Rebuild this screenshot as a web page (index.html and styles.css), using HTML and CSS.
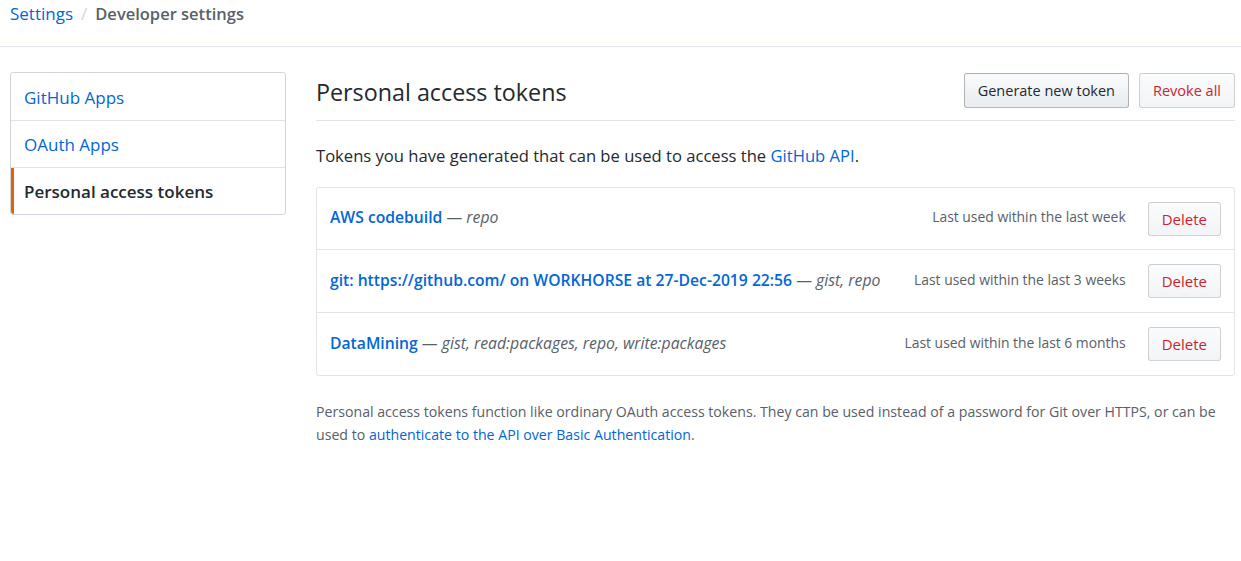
FILE: index.html
```html
<!DOCTYPE html>
<html>
<head>
<meta charset="utf-8">
<link rel="stylesheet" href="styles.css">
</head>
<body>
<header class="crumbs">
  <a class="crumb-link" href="#">Settings</a>
  <span class="crumb-sep">/</span>
  <span class="crumb-current">Developer settings</span>
</header>
<div class="layout">
  <nav class="menu">
    <a class="menu-item" href="#">GitHub Apps</a>
    <a class="menu-item" href="#">OAuth Apps</a>
    <a class="menu-item selected" href="#">Personal access tokens</a>
  </nav>
  <main class="content">
    <div class="subhead">
      <h2 class="subhead-title">Personal access tokens</h2>
      <div class="subhead-actions">
        <button class="btn">Generate new token</button>
        <button class="btn btn-danger">Revoke all</button>
      </div>
    </div>
    <p class="intro">Tokens you have generated that can be used to access the <a href="#">GitHub API</a>.</p>
    <div class="box">
      <div class="token-row">
        <div class="token-desc"><a class="token-name" href="#">AWS codebuild</a> <span class="scopes">— <em>repo</em></span></div>
        <span class="last-used">Last used within the last week</span>
        <button class="btn btn-danger btn-sm">Delete</button>
      </div>
      <div class="token-row">
        <div class="token-desc"><a class="token-name" href="#">git: https://github.com/ on WORKHORSE at 27-Dec-2019 22:56</a> <span class="scopes">— <em>gist, repo</em></span></div>
        <span class="last-used">Last used within the last 3 weeks</span>
        <button class="btn btn-danger btn-sm">Delete</button>
      </div>
      <div class="token-row">
        <div class="token-desc"><a class="token-name" href="#">DataMining</a> <span class="scopes">— <em>gist, read:packages, repo, write:packages</em></span></div>
        <span class="last-used">Last used within the last 6 months</span>
        <button class="btn btn-danger btn-sm">Delete</button>
      </div>
    </div>
    <p class="note">Personal access tokens function like ordinary OAuth access tokens. They can be used instead of a password for Git over HTTPS, or can be used to <a href="#">authenticate to the API over Basic Authentication</a>.</p>
  </main>
</div>
</body>
</html>
```
FILE: styles.css
```css
* { box-sizing: border-box; }
html, body { margin: 0; padding: 0; background: #fff; }
body {
  font-family: "Open Sans", "Noto Sans", sans-serif;
  color: #24292e;
  font-size: 15px;
}
a { color: #0366d6; text-decoration: none; }

.crumbs {
  height: 47px;
  border-bottom: 1px solid #e1e4e8;
  padding: 2px 10px 0;
  font-size: 17px;
  display: flex;
  align-items: flex-start;
  gap: 8px;
  line-height: 24px;
}
.crumb-link { color: #0366d6; }
.crumb-sep { color: #d1d5da; }
.crumb-current { color: #586069; font-weight: 600; font-size: 16.5px; }

.layout {
  display: flex;
  padding: 25px 6px 0 10px;
  gap: 30px;
}
.menu {
  width: 276px;
  flex: none;
  border: 1px solid #d1d5da;
  border-radius: 3px;
  align-self: flex-start;
  display: flex;
  flex-direction: column;
}
.menu-item {
  display: block;
  height: 47px;
  line-height: 48px;
  padding: 0 13px;
  font-size: 17px;
  color: #0366d6;
  border-bottom: 1px solid #e1e4e8;
}
.menu-item:first-child { height: 48px; line-height: 49px; }
.menu-item:last-child { border-bottom: 0; height: 46px; }
.menu-item.selected {
  color: #24292e;
  font-weight: 600;
  border-left: 3px solid #e36209;
  padding-left: 10px;
  border-bottom-left-radius: 3px;
}

.content { flex: 1; min-width: 0; }
.subhead {
  display: flex;
  align-items: center;
  justify-content: space-between;
  height: 49px;
  border-bottom: 1px solid #e1e4e8;
}
.subhead-title {
  margin: 0;
  font-size: 23.3px;
  font-weight: 400;
  line-height: 36px;
  margin-top: -8px;
}
.subhead-actions { display: flex; gap: 10px; margin-top: -12px; }

.btn {
  font-family: inherit;
  font-size: 14.5px;
  font-weight: 400;
  color: #24292e;
  background: linear-gradient(#fafbfc, #e8ecf0);
  border: 1px solid rgba(27,31,35,0.3);
  border-radius: 3px;
  height: 35px;
  padding: 0 13px;
  cursor: pointer;
}
.btn-danger {
  color: #cb2431;
  background: linear-gradient(#fafbfc, #f2f4f6);
  border-color: rgba(27,31,35,0.18);
}
.btn-sm { height: 34px; padding: 0 13px; font-size: 15px; }

.intro {
  margin: 0;
  padding: 22px 0 0;
  font-size: 16.6px;
  line-height: 25px;
  height: 66px;
}

.box {
  border: 1px solid #e1e4e8;
  border-radius: 3px;
}
.token-row {
  display: flex;
  align-items: center;
  height: 62px;
  padding: 0 13px;
  border-bottom: 1px solid #e1e4e8;
}
.token-row:nth-child(2) { height: 63px; }
.token-row:last-child { border-bottom: 0; height: 62px; }
.token-desc { flex: 1; font-size: 15.7px; margin-top: -3px; }
.token-name { font-weight: 600; }
.scopes { color: #586069; font-size: 15.8px; }
.scopes em { font-style: italic; }
.last-used {
  color: #586069;
  font-size: 13.9px;
  margin-right: 22px;
  margin-top: -4px;
}

.note {
  margin: 24px 0 0;
  font-size: 14.15px;
  line-height: 23px;
  color: #586069;
}
```
